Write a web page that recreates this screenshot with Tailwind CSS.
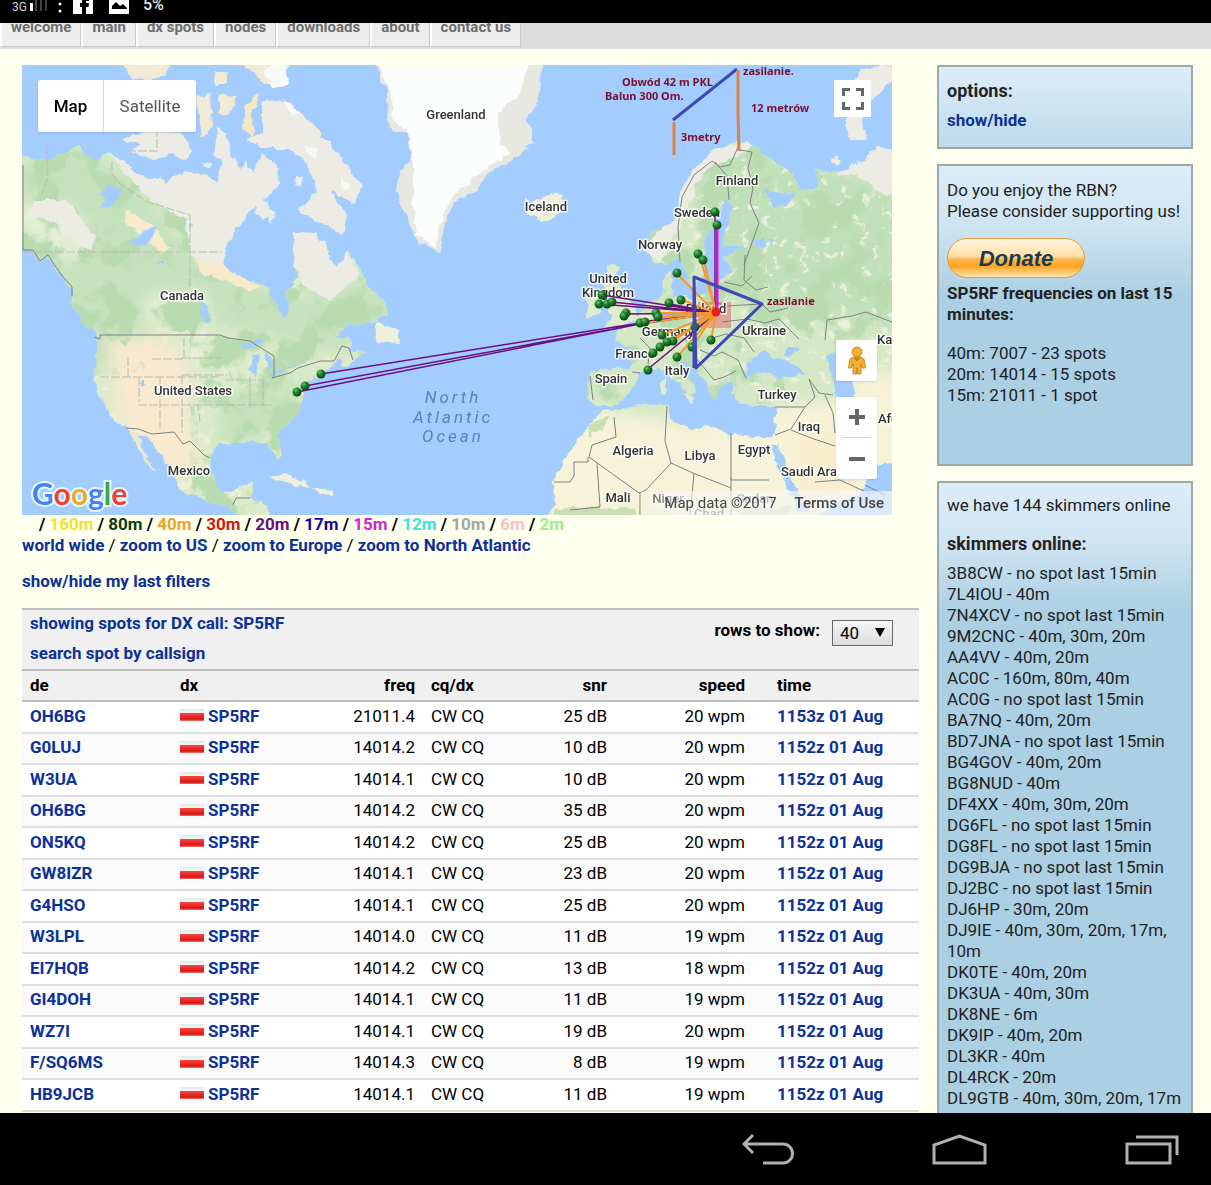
<!DOCTYPE html>
<html lang="en">
<head>
    <meta charset="UTF-8">
    <meta name="viewport" content="width=device-width, initial-scale=1.0">
    <title>Reverse Beacon Network - SP5RF</title>
    <script src="https://cdn.jsdelivr.net/npm/@tailwindcss/browser@4"></script>
</head>

<body class="bg-black h-screen flex flex-col overflow-hidden font-['Roboto',sans-serif] text-[17px] leading-[21px] text-[#222]">
    <!-- Status bar -->
    <div class="h-[23px] shrink-0 bg-black text-white flex items-start overflow-hidden">
        <div class="ml-3 mt-px text-xs leading-3 text-gray-300">3G</div>
        <svg class="ml-0.5 w-[18px] h-3" viewBox="0 0 18 12">
            <path d="M1 3h3v8H1z" fill="#fff"/>
            <path d="M6 0h2v11H6zM11 0h2v11h-2zM16 0h2v11h-2z" fill="#444"/>
        </svg>
        <svg class="ml-2 w-[10px] h-[14px]" viewBox="0 0 10 14" fill="#fff"><circle cx="5" cy="4" r="1.5"/><circle cx="5" cy="11" r="1.5"/></svg>
        <svg class="ml-2 w-[20px] h-[14px]" viewBox="0 0 20 14"><path d="M0 0h20v14H0z" fill="#fff"/><path d="M9 14V7H7V3h2V0h7v1h-3v2h3l-.5 4H13v7z" fill="#000"/></svg>
        <svg class="ml-4 w-[20px] h-[14px]" viewBox="0 0 20 14"><path d="M0 0h20v14H0z" fill="#fff"/><path d="M3 9V6l4-4 4 4 3-2 4 4v1z" fill="#000"/></svg>
        <div class="ml-[14px] -mt-[3px] leading-4 text-base text-gray-200 font-medium">5%</div>
    </div>

    <div class="flex-1 min-h-0 overflow-hidden bg-[#ffffee]">
        <!-- Site navigation -->
        <nav class="h-[26px] overflow-hidden bg-[#dcdcdc] flex items-end pb-0.5 text-[15px] font-bold text-[#6c6c6c]">
            <a href="#" class="h-10 pt-[10px] px-[9px] bg-[#ededed] border-l-2 border-l-white border-r border-b border-[#c8c8c8]">welcome</a>
            <a href="#" class="h-10 pt-[10px] px-[9px] bg-[#ededed] border-l-2 border-l-white border-r border-b border-[#c8c8c8]">main</a>
            <a href="#" class="h-10 pt-[10px] px-[9px] bg-[#ededed] border-l-2 border-l-white border-r border-b border-[#c8c8c8]">dx spots</a>
            <a href="#" class="h-10 pt-[10px] px-[9px] bg-[#ededed] border-l-2 border-l-white border-r border-b border-[#c8c8c8]">nodes</a>
            <a href="#" class="h-10 pt-[10px] px-[9px] bg-[#ededed] border-l-2 border-l-white border-r border-b border-[#c8c8c8]">downloads</a>
            <a href="#" class="h-10 pt-[10px] px-[9px] bg-[#ededed] border-l-2 border-l-white border-r border-b border-[#c8c8c8]">about</a>
            <a href="#" class="h-10 pt-[10px] px-[9px] bg-[#ededed] border-l-2 border-l-white border-r border-b border-[#c8c8c8]">contact us</a>
        </nav>

        <div class="flex gap-[18px] pt-4 pl-[22px] pr-[18px]">
            <main class="flex-1 min-w-0">
                <!-- Map -->
                <div class="relative h-[450px] mr-[27px] overflow-hidden bg-[#a3ccff]">
                    <svg class="w-full h-full" viewBox="22 65 870 450" preserveAspectRatio="xMidYMid slice">
                        <defs>
                            <filter id="coast" x="0" y="0" width="100%" height="100%" color-interpolation-filters="sRGB">
                                <feTurbulence type="fractalNoise" baseFrequency="0.09" numOctaves="3" seed="4" result="n"/>
                                <feDisplacementMap in="SourceGraphic" in2="n" scale="8" xChannelSelector="R" yChannelSelector="G"/>
                            </filter>
                            <filter id="forest" x="0" y="0" width="100%" height="100%" color-interpolation-filters="sRGB">
                                <feTurbulence type="fractalNoise" baseFrequency="0.03" numOctaves="5" seed="11"/>
                                <feColorMatrix values="0 0 0 0 0.72  0 0 0 0 0.86  0 0 0 0 0.69  0 9 0 0 -4.6"/>
                                <feComposite in2="SourceGraphic" operator="in"/>
                            </filter>
                            <filter id="pale" x="0" y="0" width="100%" height="100%" color-interpolation-filters="sRGB">
                                <feTurbulence type="fractalNoise" baseFrequency="0.1" numOctaves="3" seed="21"/>
                                <feColorMatrix values="0 0 0 0 0.92  0 0 0 0 0.94  0 0 0 0 0.86  9 0 0 0 -5.4"/>
                                <feComposite in2="SourceGraphic" operator="in"/>
                            </filter>
                            <filter id="soft" x="-20%" y="-20%" width="140%" height="140%"><feGaussianBlur stdDeviation="7"/></filter>
                            <radialGradient id="pin" cx="35%" cy="30%" r="70%">
                                <stop offset="0" stop-color="#6cc070"/><stop offset=".45" stop-color="#1d8029"/><stop offset="1" stop-color="#0a4712"/>
                            </radialGradient>
                            <path id="america" d="M15 155L35 161 47 160 60 155 70 150 80 145 84 155 95 160 110 153 125 160 138 175 150 178 163 178 166 185 172 175 185 172 205 176 218 182 222 165 228 155 234 158 240 172 247 160 252 172 262 153 277 165 278 185 270 195 262 200 250 212 240 225 228 240 222 262 235 274 250 281 268 287 273 300 284 318 289 312 285 295 297 277 292 253 293 232 313 233 328 247 330 260 338 267 348 250 357 267 370 287 387 302 387 315 373 322 350 325 333 339 350 336 349 350 368 352 343 367 338 358 330 368 320 375 305 385 303 395 302 408 287 425 276 435 283 455 280 462 273 452 267 442 253 442 240 443 220 443 211 455 210 472 220 492 233 493 242 483 255 482 250 498 267 507 271 520 240 520 227 505 207 500 187 493 177 485 173 472 163 458 150 442 137 433 142 447 157 472 150 466 137 447 126 428 110 415 97 392 94 368 98 335 83 322 70 300 72 290 60 273 48 257 40 262 32 250 15 250Z"/>
                            <path id="eurasia" d="M692 290L685 267 680 257 667 265 653 263 643 247 650 233 678 220 680 193 693 170 710 153 737 140 757 147 767 157 793 173 800 187 790 194 763 188 775 208 790 202 796 190 818 189 814 170 827 173 847 168 863 160 877 147 900 150 900 463 873 466 862 495 830 505 815 520 548 520 555 502 553 482 567 455 583 432 602 412 613 410 640 405 670 405 670 420 690 430 708 427 727 433 763 437 773 438 777 407 740 405 733 392 733 380 720 387 717 400 711 397 707 382 683 360 680 366 697 391 689 397 676 382 660 369 640 373 630 393 613 407 593 405 587 397 590 370 630 368 630 348 615 341 617 333 637 320 647 303 662 297 663 277 671 270 673 297 695 299 710 293 719 280 733 272 724 257 747 247 722 246 724 232 734 205 726 198 713 228 702 241 704 255 704 275Z"/>
                            <clipPath id="ca"><use href="#america"/></clipPath>
                            <clipPath id="ce"><use href="#eurasia"/></clipPath>
                        </defs>

                        <g filter="url(#coast)">
                            <path fill="#a3ccff" d="M0 40h920v500H0z"/>
                            <!-- North America -->
                            <use href="#america" fill="#dcebca"/>
                            <g clip-path="url(#ca)">
                                <path filter="url(#pale)" d="M15 250h390v270H15z"/>
                                <g filter="url(#soft)">
                                    <path fill="#c2e1bb" d="M15 165L75 145 130 175 150 200 190 250 235 275 290 300 400 260 400 350 320 350 215 325 205 290 150 300 150 365 90 370 60 270 15 250z" opacity=".85"/>
                                    <path fill="#bcdeb5" d="M215 445L225 395 300 375 300 420 262 440z" opacity=".7"/>
                                    <path fill="#e3eed3" d="M145 295L205 292 205 325 148 325zM15 205L60 200 95 235 95 255 60 260 15 225z"/>
                                    <path fill="#f8e9cf" d="M108 340L145 335 185 355 188 420 205 480 175 475 120 425z"/>
                                </g>
                                <path filter="url(#forest)" d="M15 140h390v190H15zM190 325h215v190H190zM90 330h55v45H90z"/>
                                <path fill="#ecebe4" d="M100 140L130 178 150 200 185 218 190 250 200 262 240 278 222 262 290 190 290 140zM290 225L335 235 360 275 330 300 310 290 290 260zM35 200L65 200 95 235 92 250 70 240 55 222 25 215z"/>
                                <path fill="#f7ebcc" d="M125 208L155 228 170 250 160 252 140 235 124 222zM195 258L225 265 262 288 250 290 200 272z"/>
                            </g>
                            <g fill="#a3ccff">
                                <path d="M95 195L108 186 122 188 117 202 103 207 106 196zM130 242L145 230 158 228 146 245 135 245zM155 263l10-5-4 6z"/>
                                <path d="M197 300l8 4 5 20-6-2zM240 345l20-7 6 4-22 9zM253 356l6-3-3 24-6-4zM262 352l10 2 3 12-5 3zM272 377l12-6-2-2-12 6zM285 368l15-4-10 6zM191 222l4 5-5 1zM142 380h4v5h-4z"/>
                            </g>
                            <!-- Arctic islands -->
                            <path fill="#ecebe4" d="M122 138L150 130 180 133 195 152 183 160 170 155 155 160 128 152 142 146zM262 100L285 102 300 112 320 132 340 155 362 188 353 205 332 190 347 215 343 235 320 222 297 210 318 192 305 160 290 150 275 150 245 140 262 132zM218 128l8 5 5 22-8 10-9-12zM258 195l18 18-14 8-7-8zM200 160l15 4-8 4zM268 216l8-1-4 8zM296 175l8 3-2 9-7-2z"/>
                            <path fill="#f0ead6" d="M122 62h50l-8 16-30 2zM196 98l14-5 2 35-10 8zM218 95l20 2-10 18-10-2zM215 70h12v14h-10zM240 62h50l-5 25-20-3z"/>
                            <path fill="#f6e8c4" d="M260 94L246 103 243 128 255 137 252 115z"/>
                            <path fill="#f7f9f8" d="M262 70l24-10 2 26-16 2zM285 100l15 12-8 4zM340 178l10 5-4 8-6-5zM300 145l18 5-4 8z"/>
                            <!-- Greenland -->
                            <path fill="#e7e8e2" d="M373 60L387 90 388 127 408 135 412 163 400 170 397 193 410 227 420 243 438 253 445 227 453 203 477 190 490 170 510 163 528 148 523 145 535 143 527 122 538 100 543 60z"/>
                            <path fill="#fbfdfd" d="M376 60L390 90 394 120 408 133 413 163 413 200 417 236 434 248 440 225 450 200 468 183 485 168 510 152 500 145 498 115 520 92 530 60z"/>
                            <!-- Atlantic islands -->
                            <path fill="#eff0dc" d="M524 197L531 204 545 196 558 193 569 207 546 222 527 213zM377 322l10 6 10 4 3 12-22-2-3-8zM268 477l18-3 20 8 4 6-25-6zM312 488l20 2 2 6-14-1z"/>
                            <path fill="#dfeccd" d="M608 265L620 268 616 280 625 293 635 310 638 319 625 325 603 327 613 318 606 311 612 300 603 287zM586 298l13-2 2 17-14 6zM661 379l5-2v18l-5-2zM680 395l14 1-1 7zM776 395h8v3h-8z"/>
                            <!-- Eurasia and Africa -->
                            <use href="#eurasia" fill="#d5e8c5"/>
                            <g clip-path="url(#ce)">
                                <g filter="url(#soft)">
                                    <path fill="#c0e0b9" d="M690 190L740 150 900 185 900 330 800 310 740 300z"/>
                                    <path fill="#f7f3d8" d="M540 415L590 408 700 425 775 405 850 400 850 375 900 370 900 520 540 520z"/>
                                    <path fill="#f9efcf" d="M790 430L850 430 850 490 800 500z"/>
                                </g>
                                <path filter="url(#pale)" d="M580 145h320v240H580z"/>
                                <path filter="url(#forest)" d="M640 145h260v200H640zM585 345h200v60H585z"/>
                                <path fill="#ecebe4" d="M845 140h60v48l-20 8-25-20-25-3zM672 190L700 150 760 140 735 158 712 165 695 185 686 215 660 262 640 250 675 215z"/>
                                <path fill="#c9dfb3" d="M590 425l18-9-5 14-15 6zM555 508h80v12h-80zM740 508h50v12h-50z"/>
                            </g>
                            <path fill="#ecebe4" d="M892 65L862 68 845 100 846 125 852 140 868 140 862 122 868 100 900 78zM832 160l6-4 4 6-6 4zM877 148l6-1v8z"/>
                            <path fill="#a3ccff" d="M745 377L748 362 765 350 773 360 785 358 806 374 780 378 765 374zM790 348l10 1-8 6-8 2zM827 355l18-4 12 20-6 32-14-2-4-20zM772 443l5 1 18 44 14 25h-10l-22-45zM836 432l6-1 20 20 12 6-4 6-18-6zM754 240l10-2 3 9-10 2zM770 237l5 1-1 7z"/>
                            <path fill="#d9e9c6" d="M678 297l8-2 1 6-7 1z"/>
                        </g>

                        <!-- Borders -->
                        <g fill="none" stroke="#7d8184" stroke-width="1" stroke-linejoin="round">
                            <path d="M23 250V165M23 250h10l7 11 8-6 12 18 12 14v9M94 337l6 2v-4h120l8 3 22 3 24 15v20l-2 2 18-5 8-5 22-7h14l8-15 7 2 4 12M126 428l12 1 14 5 22-2 9 12 7-3 14 14 6 3M233 505l3-7h14"/>
                            <path d="M680 262l-2-35 4-30 12-22 18-14 8 6 10-2 8-18M740 150l12 2-4 16 5 20-3 15 9 20-15 42M715 162l12 14 2 24M724 282l18 4 10-10M745 255l-1 25 12 10 12-3M712 300l12 6 38-2 8 8 18-4M722 322l25-3 18 4 14-4 20 20M706 340l20-6 18 4 10 14M700 350l14 6 8-4 16 8 8 18M640 338l10 10-2 16M590 376l3 24M640 373l-8-1M694 356l12 14 8 10 10-3 12-6"/>
                            <path d="M825 340l2-20 25-4 14-4 26 10M775 407h30l10-10-6-18 10 14 14 2M805 407l-14 22-16 6M791 430l20 8 24 8M825 395l8 18 2 20M667 406l-2 35 6 22-25 27-7 3-50-36 3-12 24-8-2-20M588 457v5h-14v14l-4 6h-16M731 433v47h38M731 478v10l-38-15-22-10M731 488v27M597 463l3 44-30 3M640 492v23M694 473l-4 42M865 485l20 10M815 482l25-2 30 14"/>
                        </g>
                        <path fill="none" stroke="#b5bbae" stroke-width="1" stroke-dasharray="9 2" d="M100 377h120M152 359h32v-24M160 377v52M139 377v25M128 357v22M182 405h90M138 405h44M182 358h40M182 375h45M225 380h40M47 145v35l-5 14M157 128v23h-30M112 162v12l8 10 28 18 42 13v74M22 252h200M182 375v58M200 422l-2-17M263 380v25M250 377v30"/>

                        <!-- Red square of the selected station -->
                        <path d="M698 302h33v26h-33z" fill="#e0404a" fill-opacity=".4"/>

                        <!-- Country labels -->
                        <g font-family="Roboto, sans-serif" font-size="13" font-weight="500" fill="#333" stroke="#fff" stroke-opacity=".8" stroke-width="3" paint-order="stroke" stroke-linejoin="round" text-anchor="middle">
                            <text x="456" y="119">Greenland</text>
                            <text x="546" y="211">Iceland</text>
                            <text x="737" y="185">Finland</text>
                            <text x="697" y="217">Sweden</text>
                            <text x="660" y="249">Norway</text>
                            <text x="608" y="283">United</text>
                            <text x="608" y="297">Kingdom</text>
                            <text x="182" y="300">Canada</text>
                            <text x="193" y="395">United States</text>
                            <text x="189" y="475">Mexico</text>
                            <text x="706" y="313">Poland</text>
                            <text x="668" y="336">Germany</text>
                            <text x="764" y="335">Ukraine</text>
                            <text x="635" y="358">France</text>
                            <text x="677" y="375">Italy</text>
                            <text x="611" y="383">Spain</text>
                            <text x="777" y="399">Turkey</text>
                            <text x="809" y="431">Iraq</text>
                            <text x="633" y="455">Algeria</text>
                            <text x="700" y="460">Libya</text>
                            <text x="754" y="454">Egypt</text>
                            <text x="618" y="502">Mali</text>
                            <text x="668" y="503">Niger</text>
                            <text x="755" y="503">Sudan</text>
                            <text x="709" y="518">Chad</text>
                            <text x="781" y="476" text-anchor="start">Saudi Arabia</text>
                            <text x="877" y="344" text-anchor="start">Kazakhstan</text>
                            <text x="878" y="423" text-anchor="start">Afghanistan</text>
                        </g>
                        <g font-family="Roboto, sans-serif" font-size="17" font-style="italic" letter-spacing="3" fill="#5583bd" text-anchor="middle">
                            <text x="453" y="403">North</text>
                            <text x="453" y="423">Atlantic</text>
                            <text x="453" y="442">Ocean</text>
                        </g>

                        <!-- Spot lines -->
                        <g fill="none" stroke-width="1.5">
                            <path stroke="#6d0f80" d="M321 374L640 323 716 313M305 386L640 324 716 313M297 392L640 324 716 313M602 295L716 313M599 304L716 313M612 302L716 313M626 314L716 313M640 322L716 313M670 304L716 313M648 369L716 313M715 213V313"/>
                            <path stroke="#f29a2c" stroke-width="2" d="M677 274L716 313M699 254L716 313M704 260L716 313M682 300L716 313M656 313L716 313M658 317L716 313M662 335L716 313M673 341L716 313M661 346L716 313M667 343L716 313M654 352L716 313M677 357L716 313M692 347L716 313M695 327L716 313M711 340L716 313M645 323L716 313"/>
                            <path stroke="#c41fcf" stroke-width="3" d="M717 226V313"/>
                        </g>
                        <g fill="url(#pin)" id="pins"></g>
                        <circle cx="716" cy="312" r="4.500" fill="#ed1c24"/>

                        <!-- Antenna sketch -->
                        <g fill="none" stroke-width="3" stroke-linejoin="round">
                            <path stroke="#3f48b8" d="M673 120L737 69M694 277L762 304 696 368zM694 277V368"/>
                            <path stroke="#e08048" d="M674 122V155M738 70V110L739 151"/>
                        </g>
                        <g font-family="'Noto Sans', 'Open Sans', sans-serif" font-size="11" font-weight="700" fill="#7b0f30">
                            <text x="622" y="86">Obwód 42 m PKL</text>
                            <text x="605" y="100">Balun 300 Om.</text>
                            <text x="743" y="75">zasilanie.</text>
                            <text x="751" y="112">12 metrów</text>
                            <text x="681" y="141">3metry</text>
                            <text x="767" y="305">zasilanie</text>
                        </g>

                        <text x="32" y="505" font-family="Lato, sans-serif" font-size="30" font-weight="700" stroke="#fff" stroke-width="4" stroke-opacity=".8" paint-order="stroke"><tspan fill="#4285f4">G</tspan><tspan fill="#ea4335">o</tspan><tspan fill="#e9ae28">o</tspan><tspan fill="#4285f4">g</tspan><tspan fill="#34a853">l</tspan><tspan fill="#ea4335">e</tspan></text>
                    </svg>

                    <!-- Map controls -->
                    <div class="absolute left-4 top-[15px] flex h-[52px] bg-white rounded-xs shadow">
                        <button class="w-[66px] font-medium text-black border-r border-gray-300">Map</button>
                        <button class="w-[92px] text-[#555]">Satellite</button>
                    </div>
                    <button aria-label="Full screen" class="absolute right-[21px] top-[15px] size-[37px] bg-white flex items-center justify-center">
                        <svg class="size-6" viewBox="0 0 24 24" fill="none" stroke="#666" stroke-width="3"><path d="M2.500 9V2.500H9M15 2.500h6.500V9M21.500 15v6.500H15M9 21.500H2.500V15"/></svg>
                    </button>
                    <button aria-label="Street View" class="absolute right-[15px] top-[275px] size-[41px] bg-white rounded-xs shadow flex items-center justify-center">
                        <svg class="w-[18px] h-[30px]" viewBox="0 0 18 30" fill="#f2b02e" stroke="#b9781a" stroke-width=".8"><path d="M5 11h8l3 2 1.500 9h-3L13 18v10H9.500v-6h-1v6H5V18l-1.500 4h-3L2 13z"/><circle cx="9" cy="6" r="5"/><path d="M6 12l3 3 3-3" fill="#c8811c"/></svg>
                    </button>
                    <div class="absolute right-[15px] top-[332px] w-[41px] bg-white rounded-xs shadow px-1.5 divide-y divide-gray-300">
                        <button aria-label="Zoom in" class="w-full h-[41px] flex items-center justify-center">
                            <svg class="size-4" viewBox="0 0 16 16" fill="#666"><path d="M6 0h4v6h6v4h-6v6H6v-6H0V6h6z"/></svg>
                        </button>
                        <button aria-label="Zoom out" class="w-full h-[41px] flex items-center justify-center">
                            <svg class="size-4" viewBox="0 0 16 16" fill="#666"><path d="M0 6h16v4H0z"/></svg>
                        </button>
                    </div>
                    <div class="absolute right-0 bottom-0 h-6 pl-6 pr-2 flex items-center gap-[18px] text-[15px] text-[#444] bg-linear-to-r from-[#f5f5f5]/10 to-[#f5f5f5]/70 to-15%">
                        <span>Map data ©2017</span>
                        <a href="#" class="font-medium">Terms of Use</a>
                    </div>
                </div>

                <!-- Band legend -->
                <div class="pl-[17px] -mt-px font-bold text-black">
                    / <span class="text-[#f0e130]">160m</span>
                    / <span class="text-[#0b3d0b]">80m</span>
                    / <span class="text-[#eaa52c]">40m</span>
                    / <span class="text-[#c4200f]">30m</span>
                    / <span class="text-[#6b0f72]">20m</span>
                    / <span class="text-[#1408a0]">17m</span>
                    / <span class="text-[#d61fd2]">15m</span>
                    / <span class="text-[#35e3e3]">12m</span>
                    / <span class="text-[#a5a5a5]">10m</span>
                    / <span class="text-[#f6c3c3]">6m</span>
                    / <span class="text-[#98ee8e]">2m</span>
                </div>
                <div class="text-black">
                    <a href="#" class="font-bold text-[#0b3298]">world wide</a> /
                    <a href="#" class="font-bold text-[#0b3298]">zoom to US</a> /
                    <a href="#" class="font-bold text-[#0b3298]">zoom to Europe</a> /
                    <a href="#" class="font-bold text-[#0b3298]">zoom to North Atlantic</a>
                </div>
                <div class="mt-[15px]"><a href="#" class="font-bold text-[#0b3298]">show/hide my last filters</a></div>

                <!-- Spots -->
                <div class="mt-4 h-[61px] px-2 pt-[3px] bg-[#f0f0f0] border-t-2 border-[#bdbdbd] flex justify-between font-bold">
                    <div class="flex flex-col gap-[9px] text-[#0b3298]">
                        <a href="#">showing spots for DX call: SP5RF</a>
                        <a href="#">search spot by callsign</a>
                    </div>
                    <div class="mt-[7px] mr-[18px] h-[26px] flex items-start gap-3 text-black">
                        <label for="rows">rows to show:</label>
                        <div class="relative">
                            <select id="rows" class="appearance-none block w-[61px] h-[26px] pl-[7px] border border-[#666] bg-linear-to-b from-[#f6f6f6] to-[#dcdcdc] font-normal leading-5">
                                <option>40</option>
                                <option>100</option>
                            </select>
                            <svg class="absolute right-2 top-2 w-[10px] h-[9px] pointer-events-none" viewBox="0 0 10 9"><path d="M0 0h10L5 9z"/></svg>
                        </div>
                    </div>
                </div>
                <table class="w-full table-fixed border-collapse text-black">
                    <colgroup>
                        <col class="w-[150px]"><col class="w-[150px]"><col class="w-[101px]"><col class="w-[104px]"><col class="w-[104px]"><col class="w-[138px]"><col>
                    </colgroup>
                    <thead>
                        <tr class="h-[31px] bg-[#f0f0f0] border-y-2 border-[#bdbdbd]">
                            <th class="px-2 text-left">de</th>
                            <th class="px-2 text-left">dx</th>
                            <th class="px-2 text-right">freq</th>
                            <th class="px-2 text-left">cq/dx</th>
                            <th class="pr-6 text-right">snr</th>
                            <th class="pr-6 text-right">speed</th>
                            <th class="px-2 text-left">time</th>
                        </tr>
                    </thead>
                    <tbody id="spots"></tbody>
                </table>
            </main>

            <!-- Sidebar -->
            <aside class="w-64 shrink-0 flex flex-col gap-[15px]">
                <section class="h-[84px] px-2 pt-[13px] border-2 border-[#9ba9ad] bg-[linear-gradient(#dcedf9_0px,#abcfe3_130px)]">
                    <h2 class="text-lg leading-[21px] font-bold">options:</h2>
                    <a href="#" class="block mt-[9px] font-bold text-[#0b3298]">show/hide</a>
                </section>
                <section class="h-[302px] px-2 pt-[14px] border-2 border-[#9ba9ad] bg-[linear-gradient(#dcedf9_0px,#cfe4f2_60px,#abcfe3_130px)]">
                    <p>Do you enjoy the RBN?<br>Please consider supporting us!</p>
                    <button class="block mt-4 w-[138px] h-10 rounded-full border border-[#e39a3c] bg-[linear-gradient(#fff5e0,#ffe0a6_45%,#fdb447_55%,#fba724_72%,#ffe3b0)] font-['Liberation_Sans',sans-serif] text-[22px] font-bold italic text-[#1b3a52]">Donate</button>
                    <h3 class="mt-[5px] font-bold">SP5RF frequencies on last 15 minutes:</h3>
                    <p class="mt-[18px]">40m: 7007 - 23 spots<br>20m: 14014 - 15 spots<br>15m: 21011 - 1 spot</p>
                </section>
                <section class="px-2 pt-3 pb-8 border-2 border-[#9ba9ad] bg-[linear-gradient(#dcedf9_0px,#cfe4f2_60px,#abcfe3_130px)]">
                    <p>we have 144 skimmers online</p>
                    <h2 class="mt-[17px] text-lg leading-[21px] font-bold">skimmers online:</h2>
                    <ul id="skimmers" class="mt-[9px]"></ul>
                </section>
            </aside>
        </div>
    </div>

    <!-- System buttons -->
    <div class="h-[72px] shrink-0 bg-black flex items-center justify-end gap-[138px] pr-8">
        <button aria-label="Back"><svg class="w-[52px] h-8" viewBox="0 0 52 32" fill="none" stroke="#b0b0b0" stroke-width="3"><path d="M11 2L2 11l9 9M2 11h39a9.500 9.500 0 0 1 0 19H21"/></svg></button>
        <button aria-label="Home"><svg class="w-[55px] h-8" viewBox="0 0 55 32" fill="none" stroke="#b0b0b0" stroke-width="3"><path d="M2 30V12L27.500 3 53 12v18z"/></svg></button>
        <button aria-label="Recent apps"><svg class="w-[54px] h-8" viewBox="0 0 54 32" fill="none" stroke="#b0b0b0" stroke-width="3"><path d="M2 11h43v19H2zM11 4h41v18"/></svg></button>
    </div>

    <script>
        const spots = [
            ['OH6BG', '21011.4', 25, 20, '1153z'],
            ['G0LUJ', '14014.2', 10, 20, '1152z'],
            ['W3UA', '14014.1', 10, 20, '1152z'],
            ['OH6BG', '14014.2', 35, 20, '1152z'],
            ['ON5KQ', '14014.2', 25, 20, '1152z'],
            ['GW8IZR', '14014.1', 23, 20, '1152z'],
            ['G4HSO', '14014.1', 25, 20, '1152z'],
            ['W3LPL', '14014.0', 11, 19, '1152z'],
            ['EI7HQB', '14014.2', 13, 18, '1152z'],
            ['GI4DOH', '14014.1', 11, 19, '1152z'],
            ['WZ7I', '14014.1', 19, 20, '1152z'],
            ['F/SQ6MS', '14014.3', 8, 19, '1152z'],
            ['HB9JCB', '14014.1', 11, 19, '1152z'],
        ];

        document.getElementById('spots').innerHTML = spots.map(([de, freq, snr, speed, time]) => `
            <tr class="odd:h-8 even:h-[31px] odd:bg-white even:bg-[#fafafa] border-b-2 border-[#dedede]">
                <td class="px-2 pb-0.5"><a href="#" class="font-bold text-[#0b3298]">${de}</a></td>
                <td class="px-2 pb-0.5"><a href="#" class="flex items-center gap-1 font-bold text-[#0b3298]"><span class="w-6 h-3 mb-0.5 bg-[linear-gradient(#e6e6e6_0%,#f6f6f6_35%,#f0473f_36%,#dc1414_85%,#ef7b77)]"></span>SP5RF</a></td>
                <td class="px-2 pb-0.5 text-right">${freq}</td>
                <td class="px-2 pb-0.5">CW CQ</td>
                <td class="pr-6 pb-0.5 text-right">${snr} dB</td>
                <td class="pr-6 pb-0.5 text-right">${speed} wpm</td>
                <td class="px-2 pb-0.5"><a href="#" class="font-bold text-[#0b3298]">${time} 01 Aug</a></td>
            </tr>
        `).join('');

        const skimmers = [
            '3B8CW - no spot last 15min', '7L4IOU - 40m', '7N4XCV - no spot last 15min', '9M2CNC - 40m, 30m, 20m',
            'AA4VV - 40m, 20m', 'AC0C - 160m, 80m, 40m', 'AC0G - no spot last 15min', 'BA7NQ - 40m, 20m',
            'BD7JNA - no spot last 15min', 'BG4GOV - 40m, 20m', 'BG8NUD - 40m', 'DF4XX - 40m, 30m, 20m',
            'DG6FL - no spot last 15min', 'DG8FL - no spot last 15min', 'DG9BJA - no spot last 15min',
            'DJ2BC - no spot last 15min', 'DJ6HP - 30m, 20m', 'DJ9IE - 40m, 30m, 20m, 17m, 10m', 'DK0TE - 40m, 20m',
            'DK3UA - 40m, 30m', 'DK8NE - 6m', 'DK9IP - 40m, 20m', 'DL3KR - 40m', 'DL4RCK - 20m', 'DL9GTB - 40m, 30m, 20m, 17m'
        ];

        document.getElementById('skimmers').innerHTML = skimmers.map(s => `<li>${s}</li>`).join('');

        const pins = [
            [321, 374], [305, 386], [297, 392], [602, 295], [599, 304], [607, 304], [612, 302], [626, 313], [624, 316],
            [640, 323], [645, 322], [656, 313], [658, 317], [669, 303], [681, 300], [677, 273], [698, 254], [703, 260],
            [715, 212], [717, 225], [662, 335], [673, 341], [667, 342], [660, 347], [653, 353], [648, 370], [677, 357],
            [692, 347], [695, 327], [711, 340]
        ];

        document.getElementById('pins').innerHTML = pins.map(([x, y]) => `<circle cx="${x}" cy="${y}" r="4.500"/>`).join('');
    </script>
</body>
</html>
